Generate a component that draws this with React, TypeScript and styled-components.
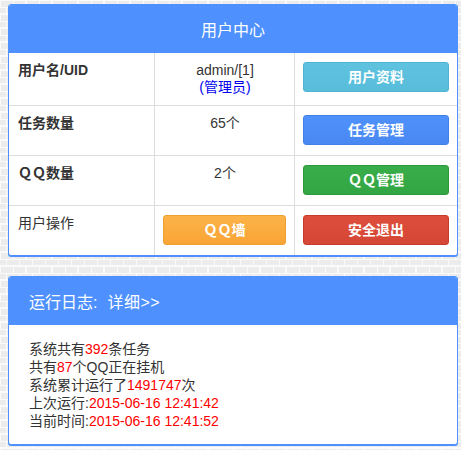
import React from 'react'
import styled, { createGlobalStyle } from 'styled-components'

const brick = encodeURIComponent(
  `<svg xmlns="http://www.w3.org/2000/svg" width="26" height="14">
    <rect width="26" height="14" fill="#fafafa"/>
    <rect x="1" y="1" width="12" height="6" fill="#ececec"/>
    <rect x="14" y="1" width="11" height="6" fill="#ececec"/>
    <rect x="0" y="8" width="6" height="5" fill="#ececec"/>
    <rect x="7" y="8" width="12" height="5" fill="#ececec"/>
    <rect x="20" y="8" width="6" height="5" fill="#ececec"/>
  </svg>`
)

/**
 * Page styles
 */
const GlobalStyle = createGlobalStyle`
  html, body {
    margin: 0;
    padding: 0;
  }
  body {
    background: #f2f2f2 url("data:image/svg+xml,${brick}") repeat;
    font-family: "Liberation Sans", "Noto Sans CJK SC", sans-serif;
    font-size: 14px;
    color: #333;
  }
`

const Page = styled.div`
  width: 450px;
  padding: 4px 0 4px 8px;
  display: flex;
  flex-direction: column;
  gap: 20px;
`

const Panel = styled.section`
  background: #fff;
  border: 1px solid #4d90fe;
  border-radius: 3px;
  box-shadow: 0 1px 0 #4d90fe;
  overflow: hidden;
`

const Heading = styled.div<{ $center?: boolean }>`
  height: 48px;
  background: #4d90fe;
  color: #fff;
  font-size: 16px;
  display: flex;
  align-items: center;
  justify-content: ${(p) => (p.$center ? 'center' : 'flex-start')};
  padding: ${(p) => (p.$center ? '0' : '0 20px')};
`

const More = styled.span`
  margin-left: 10px;
  color: #fff;
  letter-spacing: 0.5px;
`

const Grid = styled.div`
  display: grid;
  grid-template-columns: 146px 140px 1fr;
`

const Cell = styled.div<{ $first?: boolean; $last?: boolean; $align?: string; $bold?: boolean }>`
  padding: 9px 8px 9px 9px;
  line-height: 17px;
  text-align: ${(p) => p.$align || 'left'};
  font-weight: ${(p) => (p.$bold ? 'bold' : 'normal')};
  border-top: ${(p) => (p.$first ? 'none' : '1px solid #ddd')};
  border-right: ${(p) => (p.$last ? 'none' : '1px solid #ddd')};
`

const ButtonCell = styled(Cell)`
  padding: 9px 8px 10px 8px;
`

const Role = styled.span`
  color: #0000ee;
`

const colors: Record<string, [string, string, string]> = {
  info: ['#5fc3e0', '#58bdda', '#4fb4d2'],
  primary: ['#4f91fb', '#4988f2', '#3f7fe8'],
  success: ['#39ad49', '#33a644', '#2c9a3c'],
  warning: ['#fdb348', '#f9a535', '#eea030'],
  danger: ['#de4e3c', '#d44635', '#c63b2c'],
}

const Btn = styled.div<{ $kind: string }>`
  height: 28px;
  border-radius: 3px;
  border: 1px solid ${(p) => colors[p.$kind][2]};
  background: linear-gradient(${(p) => colors[p.$kind][0]}, ${(p) => colors[p.$kind][1]});
  color: #fff;
  font-weight: bold;
  font-size: 14px;
  display: flex;
  align-items: center;
  justify-content: center;
`

const Body = styled.div`
  padding: 15px 20px 14px;
  line-height: 18px;
`

const Red = styled.span`
  color: #f00;
`

const rows = [
  { label: '任务数量', value: '65个', btn: ['任务管理', 'primary'] },
  { label: 'ＱＱ数量', value: '2个', btn: ['ＱＱ管理', 'success'] },
]

export default function App() {
  return (
    <>
      <GlobalStyle />
      <Page>
        <Panel>
          <Heading $center>用户中心</Heading>
          <Grid>
            <Cell $first $bold>用户名/UID</Cell>
            <Cell $first $align="center">
              admin/[1]
              <br />
              <Role>(管理员)</Role>
            </Cell>
            <ButtonCell $first $last>
              <Btn $kind="info">用户资料</Btn>
            </ButtonCell>

            {rows.map((r) => (
              <React.Fragment key={r.label}>
                <Cell $bold>{r.label}</Cell>
                <Cell $align="center">{r.value}</Cell>
                <ButtonCell $last>
                  <Btn $kind={r.btn[1]}>{r.btn[0]}</Btn>
                </ButtonCell>
              </React.Fragment>
            ))}

            <Cell>用户操作</Cell>
            <ButtonCell>
              <Btn $kind="warning">ＱＱ墙</Btn>
            </ButtonCell>
            <ButtonCell $last>
              <Btn $kind="danger">安全退出</Btn>
            </ButtonCell>
          </Grid>
        </Panel>

        <Panel>
          <Heading>
            运行日志:<More>详细&gt;&gt;</More>
          </Heading>
          <Body>
            系统共有<Red>392</Red>条任务
            <br />
            共有<Red>87</Red>个QQ正在挂机
            <br />
            系统累计运行了<Red>1491747</Red>次
            <br />
            上次运行:<Red>2015-06-16 12:41:42</Red>
            <br />
            当前时间:<Red>2015-06-16 12:41:52</Red>
          </Body>
        </Panel>
      </Page>
    </>
  )
}
